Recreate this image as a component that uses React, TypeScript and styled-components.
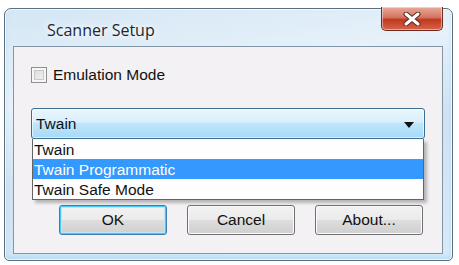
import React from "react";
import styled, { createGlobalStyle } from "styled-components";

const Global = createGlobalStyle`
  html, body { margin: 0; padding: 0; background: #ffffff; }
  body { font-family: "Liberation Sans", Arial, sans-serif; }
`;

const Window = styled.div`
  margin: 8px 0 0 4px;
  width: 449px;
  height: 253px;
  box-sizing: border-box;
  border: 1px solid #5c6f80;
  border-radius: 7px 7px 5px 5px;
  background: linear-gradient(170deg, #d4e6f4 0%, #e6f1fa 30%, #cfe2f2 55%, #d6eaf8 100%);
  display: flex;
  flex-direction: column;
  padding: 0 9px 6px 8px;
  box-shadow: inset 0 0 0 1px rgba(255,255,255,0.7), inset 0 -3px 4px rgba(120,200,240,0.35);
`;

const TitleBar = styled.div`
  height: 37px;
  display: flex;
  align-items: flex-start;
  justify-content: space-between;
`;

const Title = styled.div`
  margin: 10px 0 0 34px;
  font-family: "Open Sans", "Liberation Sans", sans-serif;
  font-size: 16px;
  color: #1c2733;
  text-shadow: 0 0 6px #fff, 0 0 10px #fff;
`;

const CloseButton = styled.div`
  margin: -2px 0 0 0;
  width: 62px;
  height: 24px;
  box-sizing: border-box;
  border: 1px solid #6b2b20;
  border-top: none;
  border-radius: 0 0 5px 5px;
  background: linear-gradient(180deg, #e9a99a 0%, #d47561 45%, #c0391f 55%, #d8644c 100%);
  display: flex;
  align-items: center;
  justify-content: center;
  box-shadow: inset 0 0 0 1px rgba(255,255,255,0.45);
`;

const Client = styled.div`
  flex: 1;
  box-sizing: border-box;
  border: 1px solid #8296a8;
  background: #f3f1f3;
  padding: 20px 17px 0 17px;
  display: flex;
  flex-direction: column;
`;

const CheckRow = styled.label`
  display: flex;
  align-items: center;
  gap: 6px;
  font-size: 15.5px;
  color: #111;
  height: 16px;
`;

const CheckBox = styled.span`
  width: 14px;
  height: 14px;
  border: 1px solid #8e8f8f;
  background: linear-gradient(135deg, #d9d9d9 0%, #f4f4f4 100%);
  box-shadow: inset 0 0 0 2px #f6f6f6, inset 0 0 0 3px #c8c8c8;
  display: inline-block;
`;

const ComboWrap = styled.div`
  position: relative;
  margin-top: 25px;
`;

const Combo = styled.div`
  height: 31px;
  box-sizing: border-box;
  border: 1px solid #3d6f93;
  border-radius: 3px;
  background: linear-gradient(180deg, #eaf6fd 0%, #d9effc 45%, #bee6fd 50%, #a7d9f5 100%);
  display: flex;
  align-items: center;
  justify-content: space-between;
  padding: 0 10px 0 4px;
  font-size: 15.5px;
  color: #111;
  box-shadow: inset 0 0 0 1px rgba(255,255,255,0.6);
`;

const Arrow = styled.span`
  width: 0;
  height: 0;
  border-left: 5px solid transparent;
  border-right: 5px solid transparent;
  border-top: 6px solid #111;
  margin-top: 2px;
`;

const List = styled.div`
  position: absolute;
  left: 1px;
  top: 31px;
  width: 392px;
  box-sizing: border-box;
  border: 1px solid #646464;
  border-top: none;
  background: #fefefe;
  box-shadow: 3px 3px 3px rgba(0,0,0,0.25);
  z-index: 2;
`;

const Item = styled.div<{ $selected?: boolean }>`
  height: 20px;
  line-height: 20px;
  padding-left: 1px;
  font-size: 15.5px;
  color: ${(p) => (p.$selected ? "#ffffff" : "#111")};
  background: ${(p) => (p.$selected ? "#3399ff" : "transparent")};
  border-top: 1px solid ${(p) => (p.$selected ? "#8a8a8a" : "transparent")};
  box-sizing: border-box;
`;

const ButtonRow = styled.div`
  display: flex;
  margin-top: 66px;
  padding-left: 28px;
  gap: 20px;
`;

const Button = styled.div<{ $default?: boolean }>`
  width: 108px;
  height: 30px;
  box-sizing: border-box;
  border: 1px solid ${(p) => (p.$default ? "#3c7fb1" : "#707070")};
  border-radius: 3px;
  background: linear-gradient(180deg, #f2f2f2 0%, #ebebeb 48%, #dddddd 52%, #cfcfcf 100%);
  box-shadow: ${(p) =>
    p.$default
      ? "inset 0 0 0 1px #48c6f5, inset 0 0 0 2px #c0e6f8"
      : "inset 0 0 0 1px #fcfcfc"};
  display: flex;
  align-items: center;
  justify-content: center;
  font-size: 15.5px;
  color: #111;
`;

export default function App() {
  return (
    <>
      <Global />
      <Window>
        <TitleBar>
          <Title>Scanner Setup</Title>
          <CloseButton>
            <svg width="18" height="14" viewBox="0 0 18 14">
              <path d="M3 2 L15 12 M15 2 L3 12" stroke="#5a2a22" strokeWidth="5" strokeLinecap="round" />
              <path d="M3 2 L15 12 M15 2 L3 12" stroke="#ffffff" strokeWidth="3" strokeLinecap="round" />
            </svg>
          </CloseButton>
        </TitleBar>
        <Client>
          <CheckRow>
            <CheckBox />
            Emulation Mode
          </CheckRow>
          <ComboWrap>
            <Combo>
              <span>Twain</span>
              <Arrow />
            </Combo>
            <List>
              <Item>Twain</Item>
              <Item $selected>Twain Programmatic</Item>
              <Item>Twain Safe Mode</Item>
            </List>
          </ComboWrap>
          <ButtonRow>
            <Button $default>OK</Button>
            <Button>Cancel</Button>
            <Button>About...</Button>
          </ButtonRow>
        </Client>
      </Window>
    </>
  );
}
